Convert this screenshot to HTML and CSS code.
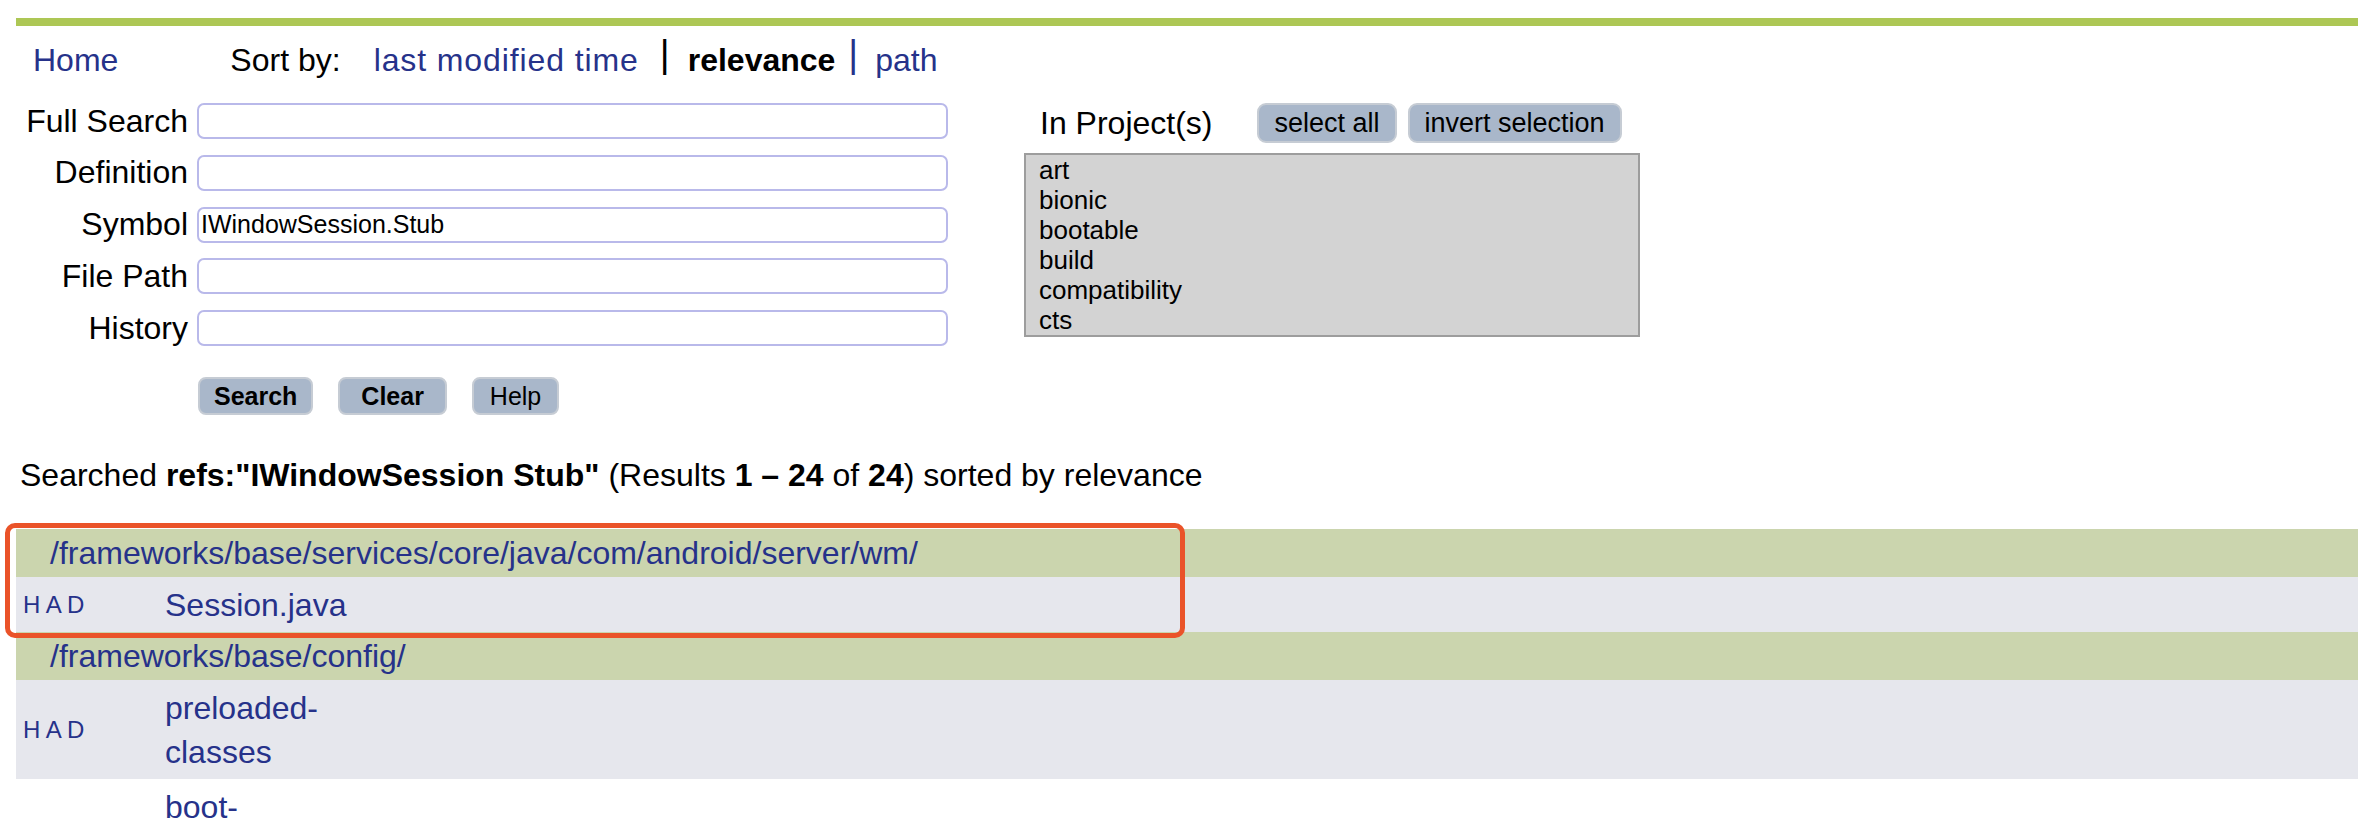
FILE: index.html
```html
<!DOCTYPE html>
<html>
<head>
<meta charset="utf-8">
<title>OpenGrok search</title>
<link rel="stylesheet" href="styles.css">
</head>
<body>
<div class="page">
  <div class="topbar"></div>
  <div class="nav">
    <a class="home" href="#">Home</a>
    <div class="sort"><span class="sort-label">Sort by:</span><a class="sort-link wide" href="#">last modified time</a><span class="sep sep1">|</span><b class="sort-cur">relevance</b><span class="sep sep2">|</span><a class="sort-link" href="#">path</a></div>
  </div>

  <div class="searcharea">
    <div class="fields">
      <div class="row"><label>Full Search</label><div class="input"></div></div>
      <div class="row"><label>Definition</label><div class="input"></div></div>
      <div class="row"><label>Symbol</label><div class="input">IWindowSession.Stub</div></div>
      <div class="row"><label>File Path</label><div class="input"></div></div>
      <div class="row"><label>History</label><div class="input"></div></div>
      <div class="buttons">
        <button class="submit bold">Search</button>
        <button class="submit bold">&nbsp;Clear&nbsp;</button>
        <button class="submit">Help</button>
      </div>
    </div>
    <div class="projects">
      <div class="proj-head">
        <span class="proj-title">In Project(s)</span>
        <button class="pbtn">select all</button>
        <button class="pbtn">invert selection</button>
      </div>
      <div class="projlist">
        <div>art</div>
        <div>bionic</div>
        <div>bootable</div>
        <div>build</div>
        <div>compatibility</div>
        <div>cts</div>
      </div>
    </div>
  </div>

  <p class="summary">Searched <b>refs:"IWindowSession Stub"</b> (Results <b>1 – 24</b> of <b>24</b>) sorted by relevance</p>

  <table class="results">
    <colgroup><col class="c-q"><col class="c-f"><col></colgroup>
    <tr class="dir"><td colspan="3"><a href="#">/frameworks/base/services/core/java/com/android/server/wm/</a></td></tr>
    <tr class="file"><td class="q"><a href="#">H</a> <a href="#">A</a> <a href="#">D</a></td><td class="f"><a href="#">Session.java</a></td><td></td></tr>
    <tr class="dir"><td colspan="3"><a href="#">/frameworks/base/config/</a></td></tr>
    <tr class="file"><td class="q"><a href="#">H</a> <a href="#">A</a> <a href="#">D</a></td><td class="f"><a href="#">preloaded-classes</a></td><td></td></tr>
    <tr class="file alt"><td class="q"></td><td class="f"><a href="#">boot-profile.txt</a></td><td></td></tr>
  </table>
</div>
<div class="highlight"></div>
</body>
</html>
```

FILE: styles.css
```css
* { box-sizing: border-box; }
html, body { margin: 0; padding: 0; background: #fff; }
body {
  font-family: "Liberation Sans", Arial, sans-serif;
  font-size: 32px;
  color: #000;
  position: relative;
  overflow: hidden;
}
a { text-decoration: none; color: #26328a; }

.page { padding-left: 16px; }
.topbar { margin-top: 18px; height: 8px; background: #adc755; }

.nav { display: flex; align-items: baseline; margin-top: 16px; height: 37px; line-height: 37px; }
.home { margin-left: 17px; }
.sort { margin-left: 112px; white-space: nowrap; }
.sort-label { margin-right: 33px; }
.sort-link.wide { letter-spacing: 0.9px; }
.sort-cur { font-weight: bold; }
.sep { font-size: 38px; line-height: 0; vertical-align: 4px; }
.sep1 { margin: 0 18px 0 21px; color: #000; }
.sep2 { margin: 0 17px 0 13px; color: #26328a; }

.searcharea { display: flex; margin-top: 24px; }
.fields { width: 932px; display: flex; flex-direction: column; gap: 15.75px; }
.row { display: flex; align-items: center; height: 36px; }
.row label { width: 172px; margin-right: 9px; text-align: right; white-space: nowrap; }
.input {
  flex: 1;
  height: 36px;
  border: 2px solid #b9b9ea;
  border-radius: 7px;
  background: #fff;
  font-size: 25px;
  padding-left: 2px;
  display: flex;
  align-items: center;
}
.buttons { display: flex; gap: 25px; margin-left: 182px; margin-top: 15.25px; }
.submit {
  height: 38px;
  font-family: "Liberation Sans", Arial, sans-serif;
  font-size: 25px;
  padding: 0 16px;
  border: 2px solid #c6ccd4;
  border-radius: 8px;
  background: #a9b7ca;
  color: #000;
}
.submit.bold { font-weight: bold; padding: 0 14px; }

.projects { margin-left: 76px; width: 616px; }
.proj-head { display: flex; align-items: center; height: 40px; padding-left: 16px; }
.proj-title { margin-right: 45px; white-space: nowrap; }
.pbtn {
  height: 40px;
  font-family: "Liberation Sans", Arial, sans-serif;
  font-size: 27px;
  padding: 0 15px;
  margin-right: 11px;
  border: 2px solid #c6ccd4;
  border-radius: 9px;
  background: #a9b7ca;
  color: #000;
  white-space: nowrap;
}
.projlist {
  margin-top: 10px;
  height: 184px;
  border: 2px solid #9d9d9d;
  background: #d3d3d3;
  font-size: 26px;
  line-height: 30px;
  padding-left: 13px;
}

.summary { margin: 41.5px 0 0 4px; line-height: 37px; }

.results { width: 100%; margin-top: 35.5px; border-collapse: collapse; table-layout: fixed; }
.c-q { width: 149px; }
.c-f { width: 192px; }
.results td { padding: 0; vertical-align: middle; }
.results tr.dir td { background: #cbd5ae; height: 48px; line-height: 38px; padding-left: 34px; }
.results tr.file td { background: #e6e7ed; padding-top: 5.5px; padding-bottom: 5.5px; line-height: 44px; }
.results tr.file.alt td { background: #fff; }
.results td.q { font-size: 24px; padding-left: 7px; white-space: nowrap; }
.results td.f { word-wrap: break-word; }

.highlight {
  position: absolute;
  left: 5px;
  top: 523px;
  width: 1180px;
  height: 115px;
  border: 5px solid #ea5329;
  border-radius: 10px;
}
```
